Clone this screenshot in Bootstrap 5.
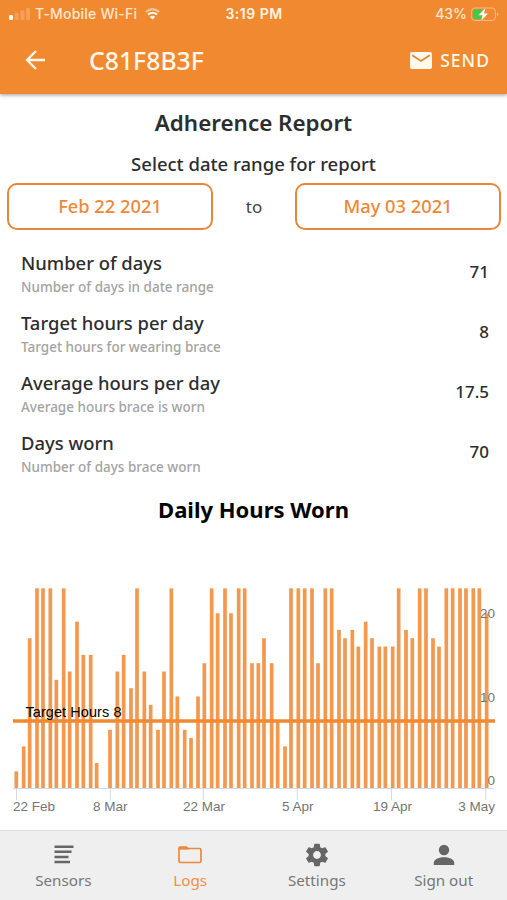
<!DOCTYPE html>
<html lang="en">
<head>
<meta charset="utf-8">
<meta name="viewport" content="width=device-width, initial-scale=1">
<title>Adherence Report</title>
<link href="https://cdn.jsdelivr.net/npm/bootstrap@5.3.0/dist/css/bootstrap.min.css" rel="stylesheet">
<style>
body{font-family:"Noto Sans","Open Sans",sans-serif;color:#2d2d2f;background:#fff;height:900px;overflow:hidden}
.app-top{background:#f18931;height:94px;box-shadow:0 1px 4px rgba(0,0,0,.4);color:#fff8ec}
.status{height:28px;font:500 14px/28px Inter,sans-serif;padding:0 8px 0 9px;color:#ffe8cf}
.status-side{flex:1 1 0}
.carrier{letter-spacing:.2px}
.clock{font-weight:600;color:#fff5e6;letter-spacing:.5px}
.bar-main{height:66px;padding:0 17px 2px 23px}
.serial{font-size:24.8px;font-weight:500;line-height:32px;margin-left:42px}
.send{font-size:17.5px;font-weight:500;line-height:24px;letter-spacing:1px}
.title-main{font-size:22.4px;font-weight:600;line-height:30px;margin-top:14px}
.subtitle{font-size:18.5px;font-weight:500;line-height:24px;margin-top:14px}
.range{padding:0 6px 0 7px;margin-top:7px}
.date-btn{width:206px;height:47px;border:2px solid #e8873a;border-radius:10px;color:#ee8838;font-size:18.3px;font-weight:500;padding:0 0 1px;background:#fff}
.to{font-size:17px;color:#444}
.stats{padding:17px 18px 0 21px}
.stat{height:60px}
.stat-name{font-size:18.4px;font-weight:500;line-height:26px;padding-top:3px}
.stat-note{font-size:13.5px;font-weight:500;line-height:18px;margin-top:2px;color:#a3a3a3}
.stat-val{font-size:17px;font-weight:500;line-height:24px;padding-top:13px}
.chart-title{font-size:22px;font-weight:700;line-height:30px;color:#000;margin-top:7px}
.chart{display:block;margin-top:46px}
.tabs{height:70px;background:#efefef;border-top:1px solid #dcdcdc;font-size:15.2px;color:#777}
.tab{flex:1 1 0;padding-top:12px;line-height:22px}
.tab svg{margin-bottom:2px}
.tab-on{color:#f0913f}
</style>
<script src="https://cdn.jsdelivr.net/npm/bootstrap@5.3.0/dist/js/bootstrap.bundle.min.js"></script>
</head>
<body class="d-flex flex-column">
<header class="app-top flex-shrink-0">
  <div class="status d-flex align-items-center">
    <div class="status-side d-flex align-items-center">
      <svg width="22" height="14" viewBox="0 0 22 14"><rect y="8" width="4" height="5" rx="1.2" fill="#fff"/><g fill="#f59f58"><rect x="5.7" y="6" width="4" height="7" rx="1"/><rect x="11.4" y="3.5" width="4" height="9.500" rx="1"/><rect x="17" y="1" width="4" height="12" rx="1"/></g></svg>
      <span class="carrier ms-1">T-Mobile Wi-Fi</span>
      <svg class="ms-2" width="15" height="12" viewBox="0 0 15 12" fill="none" stroke-width="2"><path d="M.8 4Q7.500-1.700 14.200 4" stroke="#f9c394"/><path d="M3 6.600Q7.500 2.800 12 6.600" stroke="#fff"/><path d="M7.500 11.500 4.800 8.800Q7.500 6.800 10.200 8.800Z" fill="#fff"/></svg>
    </div>
    <span class="clock">3:19 PM</span>
    <div class="status-side d-flex align-items-center justify-content-end">
      <span class="me-1">43%</span>
      <svg width="28" height="15" viewBox="0 0 30 15" preserveAspectRatio="none"><rect x=".6" y="1" width="25.500" height="12.500" rx="3.500" fill="none" stroke="#f8bd8b"/><path d="M4 2.500H12V12H4Q2.200 12 2.200 10V4.500Q2.200 2.500 4 2.500Z" fill="#35cf4e"/><path d="M28 5.200Q31 7.200 28 9.500Z" fill="#f8bd8b"/><path d="M15.800.5 7.800 8.300H12L10.400 14.500 18.700 6.300H14.300Z" fill="#fff" stroke="#f18931" stroke-width=".5"/></svg>
    </div>
  </div>
  <div class="bar-main d-flex align-items-center">
    <svg width="24" height="24" viewBox="0 0 24 24" fill="none" stroke="#fff8ec" stroke-width="2.300"><path d="M22 12H4M13 3 4 12 13 21"/></svg>
    <span class="serial">C81F8B3F</span>
    <span class="send ms-auto d-flex align-items-center"><svg class="me-2" width="22" height="17" viewBox="0 0 22 17"><rect width="22" height="17" rx="2" fill="#fff8ec"/><path d="M2.200 3.300 11 9 19.800 3.300" fill="none" stroke="#e88535" stroke-width="1.800"/></svg>SEND</span>
  </div>
</header>
<main class="flex-grow-1">
  <h1 class="title-main mb-0 text-center">Adherence Report</h1>
  <p class="subtitle mb-0 text-center">Select date range for report</p>
  <div class="range d-flex align-items-center justify-content-between">
    <button class="btn date-btn">Feb 22 2021</button><span class="to">to</span><button class="btn date-btn">May 03 2021</button>
  </div>
  <section class="stats">
    <div class="stat d-flex justify-content-between"><div><div class="stat-name">Number of days</div><div class="stat-note">Number of days in date range</div></div><div class="stat-val">71</div></div>
    <div class="stat d-flex justify-content-between"><div><div class="stat-name">Target hours per day</div><div class="stat-note">Target hours for wearing brace</div></div><div class="stat-val">8</div></div>
    <div class="stat d-flex justify-content-between"><div><div class="stat-name">Average hours per day</div><div class="stat-note">Average hours brace is worn</div></div><div class="stat-val">17.5</div></div>
    <div class="stat d-flex justify-content-between"><div><div class="stat-name">Days worn</div><div class="stat-note">Number of days brace worn</div></div><div class="stat-val">70</div></div>
  </section>
  <h2 class="chart-title mb-0 text-center">Daily Hours Worn</h2>
  <svg class="chart" width="507" height="250" viewBox="0 570 507 250" font-family="Liberation Sans, Arial, sans-serif" font-size="13.500" fill="#757575">
    <path d="M13 788.500H494M16.500 788V800M110.300 788V800M203.300 788V800M297.300 788V800M391.500 788V800M485.700 788V800" stroke="#d3d9ea" fill="none"/>
    <g id="bars" fill="#f2994f"></g>
    <path d="M13 721H495" stroke="#f18931" stroke-width="3.300"/>
    <text x="25.500" y="717" font-size="14.500" textLength="96" fill="#000">Target Hours 8</text>
    <g text-anchor="end"><text x="495" y="618">20</text><text x="495" y="702">10</text><text x="495" y="785">0</text></g>
    <text x="13" y="811">22 Feb</text><text x="93" y="811">8 Mar</text><text x="183" y="811">22 Mar</text><text x="282" y="811">5 Apr</text><text x="373" y="811">19 Apr</text><text x="495" y="811" text-anchor="end">3 May</text>
  </svg>
</main>
<nav class="tabs d-flex text-center flex-shrink-0">
  <div class="tab d-flex flex-column align-items-center"><svg width="24" height="24" viewBox="0 0 24 24" stroke="#666" stroke-width="2.500"><path d="M3.500 3.700H22.500M3.500 8.800H20.500M3.500 13.900H17.500M3.500 19H19"/></svg><span>Sensors</span></div>
  <div class="tab tab-on d-flex flex-column align-items-center"><svg width="24" height="24" viewBox="0 0 24 24"><rect x="1" y="5.500" width="22" height="14" rx="1.500" fill="none" stroke="#ee8838" stroke-width="1.700"/><path d="M.2 6.500V5Q.2 3.200 2 3.200H9L11.500 6.500Z" fill="#ee8838"/></svg><span>Logs</span></div>
  <div class="tab d-flex flex-column align-items-center"><svg width="26" height="24" viewBox="1 0 22 24" preserveAspectRatio="xMidYMid meet"><path fill="#666" transform="translate(12 12) scale(1.120) translate(-12 -12)" d="M19.430 12.980c.04-.32.070-.64.070-.98s-.03-.66-.07-.98l2.110-1.650c.19-.15.240-.42.120-.64l-2-3.460c-.12-.22-.39-.3-.61-.22l-2.490 1c-.52-.4-1.080-.73-1.690-.98l-.38-2.650C14.460 2.180 14.250 2 14 2h-4c-.25 0-.46.180-.49.420l-.38 2.650c-.61.250-1.170.590-1.690.980l-2.490-1c-.23-.09-.49 0-.61.220l-2 3.460c-.13.220-.07.490.120.640l2.110 1.650c-.04.320-.07.650-.07.980s.03.660.070.980l-2.110 1.650c-.19.150-.24.420-.12.640l2 3.460c.12.220.390.300.610.220l2.490-1c.52.400 1.080.730 1.690.980l.38 2.650c.03.240.240.420.490.420h4c.25 0 .46-.18.490-.42l.38-2.650c.61-.25 1.170-.59 1.690-.98l2.490 1c.23.090.490 0 .61-.22l2-3.460c.12-.22.070-.49-.12-.64l-2.110-1.650zM12 15.500c-1.930 0-3.500-1.570-3.500-3.500s1.570-3.500 3.500-3.500 3.500 1.570 3.500 3.500-1.570 3.500-3.500 3.500z"/></svg><span>Settings</span></div>
  <div class="tab d-flex flex-column align-items-center"><svg width="24" height="24" viewBox="0 0 24 24" fill="#666"><circle cx="12" cy="7" r="5.200"/><path d="M1.800 22V19.500C1.800 16 8 14.200 12 14.200S22.200 16 22.200 19.500V22Z"/></svg><span>Sign out</span></div>
</nav>
<script>
// Hours worn per day, 22 Feb to 3 May, and each bar's centre in thirds of a pixel
const hours=[2,5,18,24,24,24,13,24,14,20,16,16,3,0,7,14,16,12,24,14,10,7,14,24,11,7,6,11,15,24,21,24,21,24,24,15,15,18,15,8,5,24,24,24,24,15,24,24,19,18,19,17,20,18,17,17,17,24,19,18,24,24,18,17,24,24,24,24,24,24,21];
const centres=[49,71,89,111,129,151,169,191,209,231,250,272,290,312,330,352,371,393,411,433,452,474,492,514,532,554,573,594,613,635,653,675,693,716,734,756,775,792,815,833,855,873,895,914,936,954,976,995,1017,1035,1057,1075,1097,1116,1138,1156,1178,1196,1218,1237,1259,1278,1299,1317,1339,1358,1380,1398,1420,1438,1460];
document.getElementById('bars').innerHTML=hours.map((h,i)=>`<rect x="${(centres[i]/3-1.85).toFixed(2)}" y="${(788-h*8.32).toFixed(2)}" width="3.7" height="${(h*8.32).toFixed(2)}"/>`).join('');
</script>
</body>
</html>
